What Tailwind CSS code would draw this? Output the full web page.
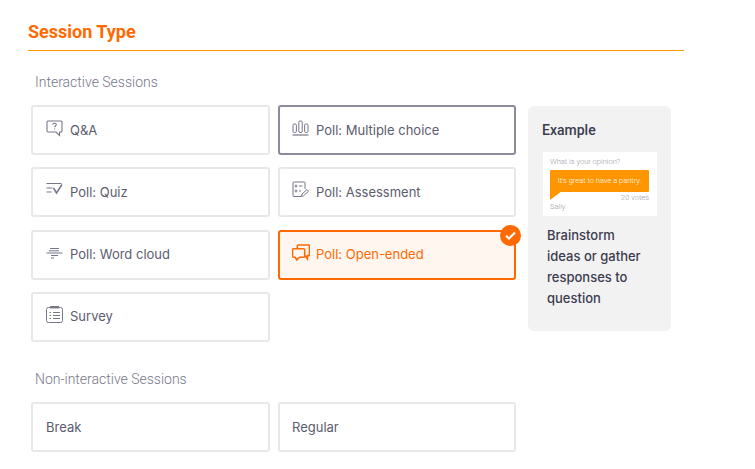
<!DOCTYPE html>
<html lang="en">
<head>
  <meta charset="UTF-8" />
  <title>Session Type</title>
  <script src="https://cdn.jsdelivr.net/npm/@tailwindcss/browser@4"></script>
</head>
<body class="bg-white h-[469px] overflow-hidden font-['Inter',sans-serif] text-[13px] text-[#5c5c6e]">
  <div class="w-[656px] ml-[28px] pt-[20px]">
    <h2 class="h-[31px] border-b border-b-[#ff9500] font-['Roboto',sans-serif] text-[18px] leading-[23px] font-bold text-[#ff6a00]">Session Type</h2>
    <p class="ml-[7px] mt-[22px] font-['Roboto',sans-serif] text-[14px] leading-[18px] font-light text-[#77778a]">Interactive Sessions</p>

    <div class="flex mt-[14px] ml-[3px]">
      <!-- session cards -->
      <div class="grid grid-cols-[239px_238px] gap-x-[8px] gap-y-[12.33px] w-[485px] content-start">
        <div class="h-[50px] flex items-center gap-[7px] pl-[13px] pt-px bg-white border-2 border-[#e8e8e8] rounded-[3px]">
          <svg class="w-[17px] h-[17px] -mt-[5px]" viewBox="0 0 17 17" fill="none" stroke="#77778a" stroke-width="1.1"><path d="M2 1h13a1 1 0 0 1 1 1v9a1 1 0 0 1-1 1h-1.5v3.5L10 12H2a1 1 0 0 1-1-1V2a1 1 0 0 1 1-1z"/><path d="M6.7 4.6c.3-1.9 3.6-1.7 3.6.2 0 1.2-1.7 1.3-1.7 2.5M8.6 8.6v1"/></svg>
          <span>Q&amp;A</span>
        </div>
        <div class="h-[50px] flex items-center gap-[7px] pl-[12px] pt-px bg-white border-2 border-[#8b8b9a] rounded-[3px]">
          <svg class="w-[17px] h-[17px] -mt-[5px]" viewBox="0 0 17 17" fill="none" stroke="#77778a" stroke-width="1"><rect x="1" y="4" width="3.4" height="8.500" rx="1.2"/><rect x="6.800" y="1" width="3.4" height="11.500" rx="1.2"/><rect x="12.600" y="4" width="3.4" height="8.500" rx="1.2"/><path d="M.5 15h16" stroke-width="1.2"/></svg>
          <span>Poll: Multiple choice</span>
        </div>

        <div class="h-[50px] flex items-center gap-[7px] pl-[13px] bg-white border-2 border-[#e8e8e8] rounded-[3px]">
          <svg class="w-[17px] h-[17px] -mt-[5px]" viewBox="0 0 17 17" fill="none" stroke="#77778a" stroke-width="1.2"><path d="M.5 2.500h15M.5 7h6M.5 11h5"/><path d="M7.500 7l3 5 5.500-8.500" stroke-width="1.500"/></svg>
          <span>Poll: Quiz</span>
        </div>
        <div class="h-[50px] flex items-center gap-[7px] pl-[12px] bg-white border-2 border-[#e8e8e8] rounded-[3px]">
          <svg class="w-[17px] h-[17px] -mt-[5px]" viewBox="0 0 17 17" fill="none" stroke="#77778a" stroke-width="1"><path d="M9 15.500H2a1 1 0 0 1-1-1V2a1 1 0 0 1 1-1h10a1 1 0 0 1 1 1v6"/><circle cx="4" cy="5" r="1"/><circle cx="4" cy="10" r="1"/><path d="M7 5h3.500M7 10h2"/><path d="M9.500 15.500l.5-2.500 5-4.500 1.500 1.800-5 4.500z"/></svg>
          <span>Poll: Assessment</span>
        </div>

        <div class="h-[50px] flex items-center gap-[7px] pl-[13px] bg-white border-2 border-[#e8e8e8] rounded-[3px]">
          <svg class="w-[17px] h-[17px] -mt-[3px]" viewBox="0 0 17 17" fill="none" stroke="#77778a" stroke-width="1"><path d="M4 3.500h9M.5 8h16M3 5.800h10M5 10.500h7M5 13h3"/></svg>
          <span>Poll: Word cloud</span>
        </div>
        <div class="relative h-[50px] flex items-center gap-[7px] pl-[12px] bg-[#fff6f0] border-2 border-[#ff6a00] rounded-[3px] text-[#ff6a00]">
          <svg class="w-[18px] h-[18px] -mr-px -mt-[3px]" viewBox="0 0 17 17" fill="none" stroke="#ff6a00" stroke-width="1.500"><path d="M5 4V2a1 1 0 0 1 1-1h9.500a1 1 0 0 1 1 1v8a1 1 0 0 1-1 1h-1v3l-2-3"/><path d="M1.500 4.500H11a1 1 0 0 1 1 1v6a1 1 0 0 1-1 1H7l-2.500 2.500L3 12.500H1.500a1 1 0 0 1-1-1v-6a1 1 0 0 1 1-1z"/></svg>
          <span>Poll: Open-ended</span>
          <div class="absolute -top-[7px] -right-[7px] w-[21px] h-[21px] rounded-full bg-[#ff6a00] flex items-center justify-center">
            <svg class="w-[11px] h-[11px]" viewBox="0 0 11 11" fill="none" stroke="#ffffff" stroke-width="2.200"><path d="M1 5.800l3 2.700 6-6"/></svg>
          </div>
        </div>

        <div class="h-[50px] flex items-center gap-[7px] pl-[13px] bg-white border-2 border-[#e8e8e8] rounded-[3px]">
          <svg class="w-[17px] h-[17px] -mt-[5px]" viewBox="0 0 17 17" fill="none" stroke="#77778a" stroke-width="1"><rect x=".5" y="1.500" width="16" height="15" rx="2"/><path d="M4 1.200h9" stroke-width="2.500"/><path d="M3.500 6.500h1.500M3.500 9.500h1.500M3.500 12.500h1.500M7 6.500h7M7 9.500h7M7 12.500h7"/></svg>
          <span>Survey</span>
        </div>
      </div>

      <!-- example panel -->
      <div class="w-[143px] h-[225px] mt-[1px] ml-[12px] bg-[#f2f2f2] rounded-[6px] pt-[16px] px-[14px]">
        <p class="font-['Roboto',sans-serif] text-[14px] leading-[17px] font-medium text-[#3c3c50]">Example</p>
        <div class="w-[114px] h-[64px] mt-[13px] ml-px bg-white px-[7px] pt-[5px] font-['Roboto',sans-serif] font-light text-[7.5px] leading-[10px] text-[#9a9aa5]">
          <p>What is your opinion?</p>
          <div class="w-[99px] h-[22px] mt-[3px] bg-[#ff9500] rounded-[1px] text-white text-center leading-[22px]">It's great to have a pantry.</div>
          <div class="w-0 h-0 -mt-px border-t-[9px] border-t-[#ff9500] border-r-[12px] border-r-transparent"></div>
          <p class="text-right -mt-[7px] w-[99px]">20 votes</p>
          <p class="-mt-px">Sally</p>
        </div>
        <p class="mt-[9px] ml-[5px] w-[98px] text-[13px] leading-[21px] font-medium text-[#3c3c50]">Brainstorm ideas or gather responses to question</p>
      </div>
    </div>

    <p class="ml-[7px] mt-[28px] font-['Roboto',sans-serif] text-[14px] leading-[18px] font-light text-[#77778a]">Non-interactive Sessions</p>
    <div class="grid grid-cols-[239px_238px] gap-x-[8px] mt-[14px] ml-[3px]">
      <div class="h-[50px] flex items-center pl-[13px] pt-px bg-white border-2 border-[#e8e8e8] rounded-[3px]">Break</div>
      <div class="h-[50px] flex items-center pl-[12px] pt-px bg-white border-2 border-[#e8e8e8] rounded-[3px]">Regular</div>
    </div>
  </div>
</body>
</html>
